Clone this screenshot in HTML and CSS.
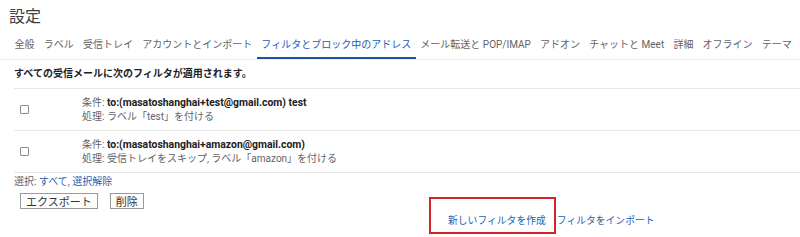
FILE: index.html
```html
<!DOCTYPE html>
<html lang="ja">
<head>
<meta charset="utf-8">
<title>設定</title>
<link rel="stylesheet" href="styles.css">
</head>
<body>
<div class="page">
  <h1 class="title">設定</h1>
  <nav class="tabs">
    <span class="tab">全般</span>
    <span class="tab">ラベル</span>
    <span class="tab">受信トレイ</span>
    <span class="tab">アカウントとインポート</span>
    <span class="tab active">フィルタとブロック中のアドレス</span>
    <span class="tab">メール転送と POP/IMAP</span>
    <span class="tab">アドオン</span>
    <span class="tab">チャットと Meet</span>
    <span class="tab">詳細</span>
    <span class="tab">オフライン</span>
    <span class="tab">テーマ</span>
  </nav>
  <div class="content">
    <div class="heading">すべての受信メールに次のフィルタが適用されます。</div>
    <div class="row">
      <div class="check-cell"><input type="checkbox" class="check"></div>
      <div class="desc">
        <div><span class="key">条件:</span> <span class="val">to:(masatoshanghai+test@gmail.com) test</span></div>
        <div><span class="key">処理: ラベル「test」を付ける</span></div>
      </div>
    </div>
    <div class="row">
      <div class="check-cell"><input type="checkbox" class="check"></div>
      <div class="desc">
        <div><span class="key">条件:</span> <span class="val">to:(masatoshanghai+amazon@gmail.com)</span></div>
        <div><span class="key">処理: 受信トレイをスキップ, ラベル「amazon」を付ける</span></div>
      </div>
    </div>
    <div class="select">選択: <a class="link">すべて</a>, <a class="link">選択解除</a></div>
    <div class="buttons">
      <button class="btn">エクスポート</button>
      <button class="btn">削除</button>
    </div>
    <div class="links">
      <span class="highlight"><a class="link">新しいフィルタを作成</a><span class="annot"></span></span>
      <a class="link">フィルタをインポート</a>
    </div>
  </div>
</div>
</body>
</html>
```
FILE: styles.css
```css
html, body {
  margin: 0;
  padding: 0;
  background: #ffffff;
}
body {
  font-family: Roboto, "Noto Sans CJK JP", sans-serif;
  color: #202124;
  width: 800px;
  height: 237px;
  overflow: hidden;
}
.title {
  margin: 5px 0 0 9px;
  font-size: 16px;
  line-height: 20px;
  font-weight: 400;
  color: #3c4043;
  font-family: "Noto Sans CJK JP", sans-serif;
}
.tabs {
  display: flex;
  margin-top: 13px;
  padding-left: 10px;
  border-bottom: 1px solid #ececec;
  white-space: nowrap;
  overflow: hidden;
}
.tab {
  padding: 0 4.6px 5px;
  font-size: 10px;
  line-height: 14px;
  color: #5f6368;
  border-bottom: 2px solid transparent;
}
.tab.active {
  color: #1a5bb8;
  border-bottom-color: #1c54a3;
}
.content {
  margin-left: 14px;
}
.heading {
  padding: 7px 0 7px;
  font-size: 10px;
  line-height: 14px;
  font-weight: 700;
  color: #202124;
  border-bottom: 1px solid #e6e6e6;
}
.row {
  display: flex;
  align-items: center;
  height: 41px;
  border-bottom: 1px solid #e6e6e6;
}
.check-cell {
  width: 68px;
  padding-left: 6px;
  box-sizing: border-box;
  display: flex;
  align-items: center;
}
.check {
  appearance: none;
  -webkit-appearance: none;
  width: 9px;
  height: 9px;
  margin: 0;
  border: 1px solid #8a8a8a;
  border-radius: 1px;
  background: #fff;
  box-sizing: border-box;
}
.desc {
  font-size: 10px;
  line-height: 14px;
}
.key {
  color: #5f6368;
}
.val {
  font-size: 10.4px;
  font-weight: 700;
  color: #202124;
}
.select {
  margin-top: 2px;
  font-size: 10px;
  line-height: 14px;
  color: #5f6368;
}
.link {
  color: #2b5fae;
  text-decoration: none;
  cursor: pointer;
}
.buttons {
  display: flex;
  gap: 12px;
  margin-top: 4px;
  padding-left: 6px;
}
.btn {
  font-family: "Noto Sans CJK JP", sans-serif;
  font-size: 11px;
  line-height: 14px;
  height: 16px;
  padding: 0 5px;
  margin: 0;
  border: 1px solid #9a9a9a;
  background: #fdfdfd;
  color: #333333;
  border-radius: 0;
}
.links {
  display: flex;
  gap: 11px;
  margin-top: 5px;
  padding-left: 434px;
  font-size: 9.8px;
  line-height: 14px;
}
.highlight {
  position: relative;
}
.annot {
  position: absolute;
  left: -19px;
  top: -17px;
  width: 127px;
  height: 37px;
  border: 2.5px solid #d3222a;
  box-sizing: border-box;
}
```
